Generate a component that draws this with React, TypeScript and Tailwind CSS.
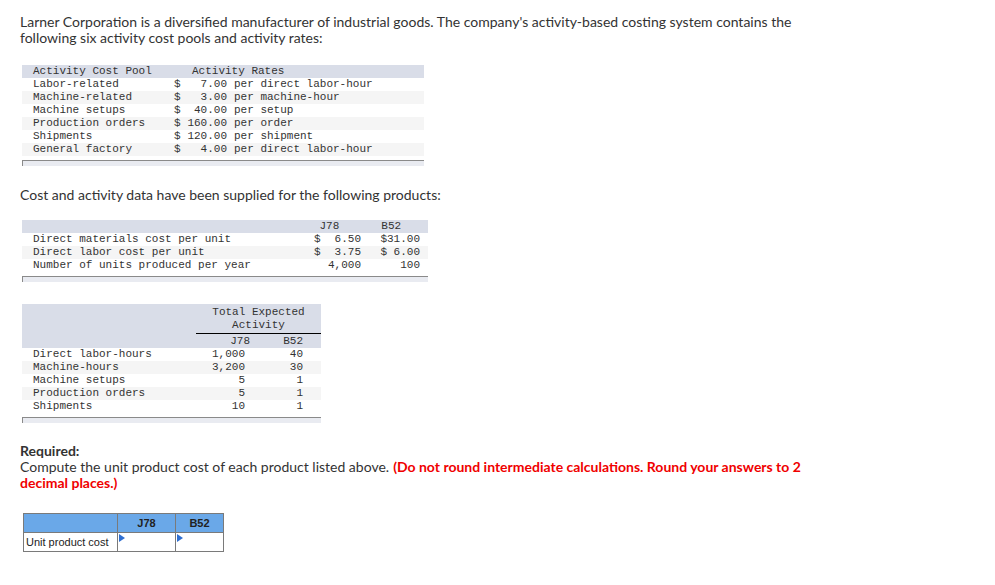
const mono = "font-['Liberation_Mono',_'Courier_New',monospace] text-[11px] leading-[13px] text-[#333]";

const rates = [
  ["Labor-related", "7.00", "per direct labor-hour"],
  ["Machine-related", "3.00", "per machine-hour"],
  ["Machine setups", "40.00", "per setup"],
  ["Production orders", "160.00", "per order"],
  ["Shipments", "120.00", "per shipment"],
  ["General factory", "4.00", "per direct labor-hour"],
];

const costs = [
  ["Direct materials cost per unit", "$", "6.50", "$31.00"],
  ["Direct labor cost per unit", "$", "3.75", "$ 6.00"],
  ["Number of units produced per year", "", "4,000", "100"],
];

const activity = [
  ["Direct labor-hours", "1,000", "40"],
  ["Machine-hours", "3,200", "30"],
  ["Machine setups", "5", "1"],
  ["Production orders", "5", "1"],
  ["Shipments", "10", "1"],
];

const TableFoot = () => (
  <div className="h-[6px] mt-[4px] border-t border-l border-[#8a8a8a] bg-[#e9ebf1]" />
);

const Marker = () => (
  <span className="absolute left-[1px] top-[1px] w-0 h-0 border-y-[4px] border-y-transparent border-l-[6px] border-l-[#2f6fd1]" />
);

export default function App() {
  return (
    <div className="w-[995px] h-[585px] bg-white font-['Lato',sans-serif] text-[#333] px-[20px] pt-[14px]">
      <p className="text-[14px] leading-[16px] w-[790px]">
        Larner Corporation is a diversified manufacturer of industrial goods. The company's activity-based costing system contains the following six activity cost pools and activity rates:
      </p>

      <div className={`${mono} w-[402px] ml-[2px] mt-[19px]`}>
        <div className="flex bg-[#d9dde8] h-[13px]">
          <div className="w-[170px] pl-[11px]">Activity Cost Pool</div>
          <div>Activity Rates</div>
        </div>
        {rates.map((r, i) => (
          <div key={r[0]} className={`flex h-[13px] ${i % 2 ? "bg-[#f5f5f5]" : "bg-white"}`}>
            <div className="w-[152px] pl-[11px]">{r[0]}</div>
            <div className="w-[10px]">$</div>
            <div className="w-[43px] text-right">{r[1]}</div>
            <div className="pl-[7px]">{r[2]}</div>
          </div>
        ))}
        <TableFoot />
      </div>

      <p className="text-[14px] leading-[16px] mt-[21px]">
        Cost and activity data have been supplied for the following products:
      </p>

      <div className={`${mono} w-[406px] ml-[2px] mt-[17px]`}>
        <div className="flex bg-[#d9dde8] h-[13px]">
          <div className="w-[292px]" />
          <div className="w-[52px] text-center">J78</div>
          <div className="w-[76px] text-center">B52</div>
        </div>
        {costs.map((r, i) => (
          <div key={r[0]} className={`flex h-[13px] ${i % 2 ? "bg-[#f5f5f5]" : "bg-white"}`}>
            <div className="w-[292px] pl-[11px]">{r[0]}</div>
            <div className="w-[10px]">{r[1]}</div>
            <div className="w-[37px] text-right">{r[2]}</div>
            <div className="w-[59px] text-right">{r[3]}</div>
          </div>
        ))}
        <TableFoot />
      </div>

      <div className={`${mono} w-[299px] ml-[2px] mt-[22px]`}>
        <div className="flex bg-[#d9dde8]">
          <div className="w-[174px]" />
          <div className="flex-1 flex flex-col pt-[2px]">
            <div className="text-center border-b border-black pb-[1px]">
              Total Expected
              <br />
              Activity
            </div>
            <div className="flex h-[13px] mt-[1px]">
              <div className="w-[54px] text-right">J78</div>
              <div className="w-[53px] text-right">B52</div>
            </div>
          </div>
        </div>
        {activity.map((r, i) => (
          <div key={r[0]} className={`flex h-[13px] ${i % 2 ? "bg-[#f5f5f5]" : "bg-white"}`}>
            <div className="w-[174px] pl-[11px]">{r[0]}</div>
            <div className="w-[49px] text-right">{r[1]}</div>
            <div className="w-[58px] text-right">{r[2]}</div>
          </div>
        ))}
        <TableFoot />
      </div>

      <div className="mt-[20px] text-[14px] leading-[16px]">
        <div className="font-bold">Required:</div>
        <div className="flex gap-[4px]">
          <span>Compute the unit product cost of each product listed above.</span>
          <b className="text-[#f00000]">(Do not round intermediate calculations. Round your answers to 2</b>
        </div>
        <b className="block text-[#f00000]">decimal places.)</b>
      </div>

      <div className="mt-[22px] ml-[3px] w-[201px] border border-[#7a7a7a] font-['Liberation_Sans',Arial,sans-serif] text-[11px]">
        <div className="flex h-[19px] bg-[#6aa8e8] border-b border-[#7a7a7a]">
          <div className="w-[94px] border-r border-[#7a7a7a]" />
          <div className="w-[58px] border-r border-[#7a7a7a] flex items-center justify-center font-bold text-[#222]">J78</div>
          <div className="flex-1 flex items-center justify-center font-bold text-[#222]">B52</div>
        </div>
        <div className="flex h-[18px] bg-white">
          <div className="w-[94px] border-r border-[#7a7a7a] flex items-center pl-[2px] text-[#222]">Unit product cost</div>
          <div className="w-[58px] border-r border-[#7a7a7a] relative"><Marker /></div>
          <div className="flex-1 relative"><Marker /></div>
        </div>
      </div>
    </div>
  );
}
